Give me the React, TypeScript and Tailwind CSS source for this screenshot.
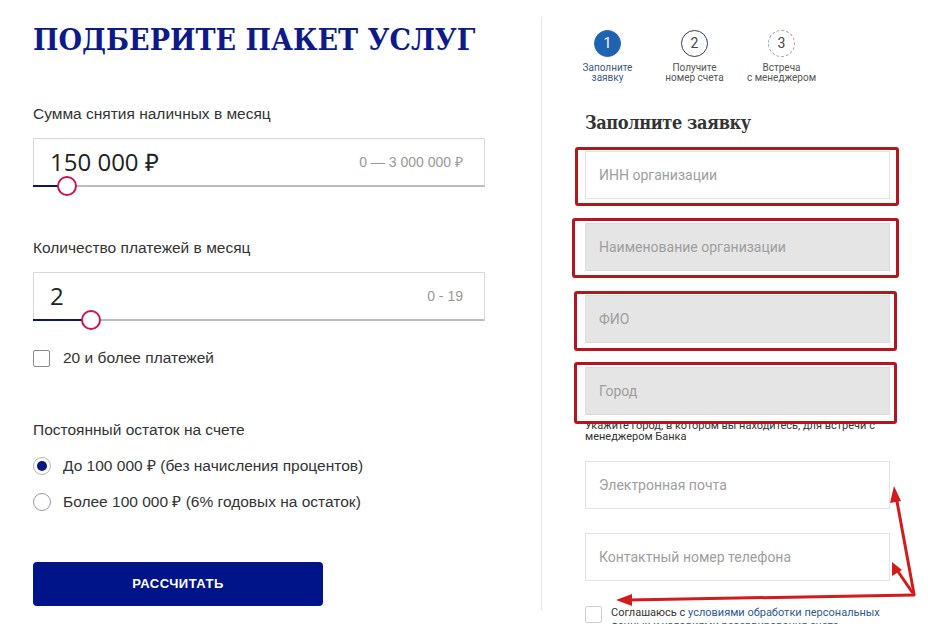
import React from "react";

const Ruble = () => <span>₽</span>;

function Slider({ value, range, thumbX }: { value: React.ReactNode; range: React.ReactNode; thumbX: number }) {
  return (
    <div className="relative mt-[14px] h-[49px] w-[452px] border border-b-2 border-[#d9d9d9] border-b-[#bdbdbd] flex items-center justify-between pl-[16px] pr-[21px]">
      <span className="text-[24px] text-[#222] font-['Open_Sans',sans-serif] leading-none">{value}</span>
      <span className="text-[14px] text-[#999] font-['Liberation_Sans',Arial,sans-serif]">{range}</span>
      <div className="absolute left-[-1px] bottom-[-2px] h-[2px] bg-[#0b1760]" style={{ width: thumbX - 33 - 8 }} />
      <div
        className="absolute bottom-[-11px] w-[20px] h-[20px] rounded-full border-2 border-[#c9164f] bg-white"
        style={{ left: thumbX - 33 - 1 - 10 }}
      />
    </div>
  );
}

function Step({ n, label, variant }: { n: string; label: React.ReactNode; variant: "active" | "next" | "dotted" }) {
  const circle =
    variant === "active"
      ? "bg-[#1f64b3] text-white border border-[#1f64b3]"
      : variant === "next"
      ? "bg-white text-[#444] border border-[#2a3a6a]"
      : "bg-white text-[#444] border border-dashed border-[#9aa4b4]";
  return (
    <div className="w-[87px] flex flex-col items-center">
      <div className={`w-[27px] h-[27px] rounded-full flex items-center justify-center text-[14px] ${circle}`}>{n}</div>
      <div className={`mt-[6px] text-[10px] leading-[10px] text-center ${variant === "active" ? "text-[#3d5b86]" : "text-[#555]"}`}>
        {label}
      </div>
    </div>
  );
}

function Field({ ph, gray, mt }: { ph: string; gray?: boolean; mt: string }) {
  return (
    <div
      className={`${mt} h-[48px] w-[305px] border flex items-center pl-[13px] text-[14px] text-[#9e9e9e] ${
        gray ? "bg-[#e5e5e5] border-[#dcdcdc]" : "bg-white border-[#e3e3e3]"
      }`}
    >
      {ph}
    </div>
  );
}

export default function App() {
  return (
    <div className="relative w-[933px] h-[639px] overflow-hidden bg-white flex">
      {/* Left column */}
      <div className="flex-none w-[541px] pl-[33px] flex flex-col font-['Liberation_Sans',Arial,sans-serif] text-[#333]">
        <div className="mt-[20px] leading-[40px] text-[30px] font-bold text-[#0d1a8a] font-['DejaVu_Serif',serif] [font-stretch:condensed] whitespace-nowrap">
          ПОДБЕРИТЕ ПАКЕТ УСЛУГ
        </div>
        <div className="mt-[44px] leading-[20px] text-[15.5px]">Сумма снятия наличных в месяц</div>
        <Slider
          value={
            <>
              150 000 <Ruble />
            </>
          }
          range={
            <>
              0 — 3 000 000 <Ruble />
            </>
          }
          thumbX={67}
        />
        <div className="mt-[51px] leading-[20px] text-[15.5px]">Количество платежей в месяц</div>
        <Slider value="2" range="0 - 19" thumbX={91} />
        <div className="mt-[27px] h-[20px] flex items-center">
          <div className="w-[17px] h-[17px] border border-[#8a8a8a] rounded-[2px] bg-white" />
          <span className="ml-[13px] text-[15.5px]">20 и более платежей</span>
        </div>
        <div className="mt-[52px] leading-[20px] text-[15.5px]">Постоянный остаток на счете</div>
        <div className="mt-[16px] h-[20px] flex items-center">
          <div className="w-[18px] h-[18px] rounded-full border border-[#b5b5b5] flex items-center justify-center">
            <div className="w-[10px] h-[10px] rounded-full bg-[#0b1780]" />
          </div>
          <span className="ml-[12px] text-[15.5px]">
            До 100 000 <Ruble /> (без начисления процентов)
          </span>
        </div>
        <div className="mt-[16px] h-[20px] flex items-center">
          <div className="w-[18px] h-[18px] rounded-full border border-[#9a9a9a]" />
          <span className="ml-[12px] text-[15.5px]">
            Более 100 000 <Ruble /> (6% годовых на остаток)
          </span>
        </div>
        <button className="mt-[50px] w-[290px] h-[44px] rounded-[4px] bg-[#00148a] text-white text-[13px] font-bold tracking-[0.5px] flex items-center justify-center">
          РАССЧИТАТЬ
        </button>
      </div>

      {/* Divider */}
      <div className="flex-none w-px bg-[#e6e6e6] self-start mt-[17px] h-[593px]" />

      {/* Right column */}
      <div className="flex-1 flex flex-col font-['Roboto',sans-serif] text-[#333]">
        <div className="mt-[30px] pl-[22px] flex">
          <Step n="1" variant="active" label={<>Заполните<br />заявку</>} />
          <Step n="2" variant="next" label={<>Получите<br />номер счета</>} />
          <Step n="3" variant="dotted" label={<>Встреча<br />с менеджером</>} />
        </div>
        <div className="pl-[43px] flex flex-col">
          <div className="mt-[28px] leading-[24px] text-[18px] tracking-[-0.4px] font-bold text-[#333] font-['DejaVu_Serif',serif] [font-stretch:condensed]">
            Заполните заявку
          </div>
          <Field mt="mt-[16px]" ph="ИНН организации" />
          <Field mt="mt-[24px]" ph="Наименование организации" gray />
          <Field mt="mt-[24px]" ph="ФИО" gray />
          <Field mt="mt-[24px]" ph="Город" gray />
          <div className="mt-[5px] text-[11px] leading-[11px] text-[#333] w-[300px]">
            Укажите город, в котором вы находитесь, для встречи с менеджером Банка
          </div>
          <Field mt="mt-[19px]" ph="Электронная почта" />
          <Field mt="mt-[24px]" ph="Контактный номер телефона" />
          <div className="mt-[25px] h-[18px] overflow-hidden flex items-start">
            <div className="flex-none w-[17px] h-[17px] border border-[#cfcfcf] rounded-[2px] bg-white" />
            <div className="ml-[9px] text-[11px] leading-[13px] text-[#333] w-[280px]">
              Соглашаюсь с <span className="text-[#2a5a92]">условиями обработки персональных данных и условиями резервирования счета</span>
            </div>
          </div>
        </div>
      </div>

      {/* Annotation boxes */}
      <div className="absolute left-[575px] top-[147px] w-[324px] h-[59px] border-[3px] border-[#b3161c] rounded-[3px]" />
      <div className="absolute left-[572px] top-[218px] w-[327px] h-[60px] border-[3px] border-[#b3161c] rounded-[3px]" />
      <div className="absolute left-[574px] top-[291px] w-[323px] h-[60px] border-[3px] border-[#b3161c] rounded-[3px]" />
      <div className="absolute left-[574px] top-[362px] w-[323px] h-[62px] border-[3px] border-[#b3161c] rounded-[3px]" />

      {/* Annotation arrows */}
      <svg className="absolute left-0 top-0 pointer-events-none" width="933" height="639">
        <g stroke="#d21c1c" strokeWidth="3" fill="none" strokeLinecap="round">
          <line x1="914" y1="594" x2="896" y2="496" />
          <line x1="912" y1="592" x2="897" y2="570" />
          <line x1="914" y1="595" x2="628" y2="600" />
        </g>
        <g fill="#d21c1c">
          <polygon points="894,486 890,503 901,501" />
          <polygon points="892,562 892,576 902,570" />
          <polygon points="616,600 632,594 632,606" />
        </g>
      </svg>
    </div>
  );
}
